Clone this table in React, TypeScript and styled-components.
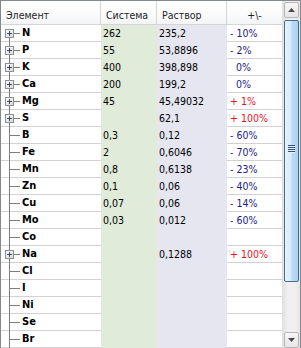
import React from "react";
import styled, { createGlobalStyle } from "styled-components";

interface RowType {
  name: string;
  expandable?: boolean;
  system: string;
  solution: string;
  diff: string;
  up?: boolean;
}

const rows: RowType[] = [
  { name: "N", expandable: true, system: "262", solution: "235,2", diff: "- 10%" },
  { name: "P", expandable: true, system: "55", solution: "53,8896", diff: "- 2%" },
  { name: "K", expandable: true, system: "400", solution: "398,898", diff: "  0%" },
  { name: "Ca", expandable: true, system: "200", solution: "199,2", diff: "  0%" },
  { name: "Mg", expandable: true, system: "45", solution: "45,49032", diff: "+ 1%", up: true },
  { name: "S", expandable: true, system: "", solution: "62,1", diff: "+ 100%", up: true },
  { name: "B", system: "0,3", solution: "0,12", diff: "- 60%" },
  { name: "Fe", system: "2", solution: "0,6046", diff: "- 70%" },
  { name: "Mn", system: "0,8", solution: "0,6138", diff: "- 23%" },
  { name: "Zn", system: "0,1", solution: "0,06", diff: "- 40%" },
  { name: "Cu", system: "0,07", solution: "0,06", diff: "- 14%" },
  { name: "Mo", system: "0,03", solution: "0,012", diff: "- 60%" },
  { name: "Co", system: "", solution: "", diff: "" },
  { name: "Na", expandable: true, system: "", solution: "0,1288", diff: "+ 100%", up: true },
  { name: "Cl", system: "", solution: "", diff: "" },
  { name: "I", system: "", solution: "", diff: "" },
  { name: "Ni", system: "", solution: "", diff: "" },
  { name: "Se", system: "", solution: "", diff: "" },
  { name: "Br", system: "", solution: "", diff: "" },
];

const TreeMark: React.FC<{ expandable?: boolean; first?: boolean }> = ({ expandable, first }) => (
  <TreeSvg width="21" height="17" viewBox="0 0 21 17">
    <line x1="8.5" y1={first ? 8 : 0} x2="8.5" y2="17" stroke="#7d7d7d" />
    <line x1={expandable ? 13 : 9} y1="8.5" x2="19" y2="8.5" stroke="#7d7d7d" />
    {expandable && (
      <>
        <defs>
          <linearGradient id="bx" x1="0" y1="0" x2="1" y2="1">
            <stop offset="0" stopColor="#ffffff" />
            <stop offset="1" stopColor="#d6d6d6" />
          </linearGradient>
        </defs>
        <rect x="4.5" y="4.5" width="8" height="8" fill="url(#bx)" stroke="#8e8f8f" />
        <line x1="6" y1="8.5" x2="11" y2="8.5" stroke="#3d4560" />
        <line x1="8.5" y1="6" x2="8.5" y2="11" stroke="#3d4560" />
      </>
    )}
  </TreeSvg>
);

const Arrow: React.FC<{ down?: boolean }> = ({ down }) => (
  <svg width="7" height="4" viewBox="0 0 7 4">
    <polygon points={down ? "0,0 7,0 3.5,4" : "0,4 7,4 3.5,0"} fill="#4a4a4a" />
  </svg>
);

const App: React.FC = () => {
  return (
    <>
      <GlobalStyle />
      <Frame>
        <TableArea>
          <HeaderRow>
            <HeaderCell>Элемент</HeaderCell>
            <HeaderCell>Система</HeaderCell>
            <HeaderCell>Раствор</HeaderCell>
            <HeaderCell $center>+\-</HeaderCell>
          </HeaderRow>
          {rows.map((row, i) => (
            <Row key={row.name}>
              <NameCell>
                <TreeMark expandable={row.expandable} first={i === 0} />
                <Name>{row.name}</Name>
              </NameCell>
              <ValueCell $bg="#e1ebd9">{row.system}</ValueCell>
              <ValueCell $bg="#e6e6f1">{row.solution}</ValueCell>
              <DiffCell $up={row.up}>{row.diff}</DiffCell>
            </Row>
          ))}
        </TableArea>
        <ScrollBar>
          <ScrollButton>
            <Arrow />
          </ScrollButton>
          <Thumb>
            <svg width="7" height="8" viewBox="0 0 7 8">
              <rect x="0" y="0" width="7" height="1" fill="#2e4f72" />
              <rect x="0" y="2" width="7" height="1" fill="#2e4f72" />
              <rect x="0" y="4" width="7" height="1" fill="#2e4f72" />
              <rect x="0" y="6" width="7" height="1" fill="#2e4f72" />
              <rect x="0" y="1" width="7" height="1" fill="#e6f2fc" />
              <rect x="0" y="3" width="7" height="1" fill="#e6f2fc" />
              <rect x="0" y="5" width="7" height="1" fill="#e6f2fc" />
              <rect x="0" y="7" width="7" height="1" fill="#e6f2fc" />
            </svg>
          </Thumb>
          <Spacer />
          <ScrollButton>
            <Arrow down />
          </ScrollButton>
        </ScrollBar>
      </Frame>
    </>
  );
};

export default App;

// Styled Components
const GlobalStyle = createGlobalStyle`
  html, body {
    margin: 0;
    padding: 0;
    background: #ffffff;
    overflow: hidden;
  }
  body {
    font-family: "DejaVu Sans Condensed", "DejaVu Sans", sans-serif;
  }
`;

const Frame = styled.div`
  width: 301px;
  height: 349px;
  box-sizing: border-box;
  border: 1px solid #828790;
  display: flex;
  overflow: hidden;
  background: #ffffff;
`;

const TableArea = styled.div`
  width: 281px;
  display: flex;
  flex-direction: column;
`;

const columns = "100px 56px 70px 55px";

const HeaderRow = styled.div`
  display: grid;
  grid-template-columns: ${columns};
  height: 24px;
  box-sizing: border-box;
  border-bottom: 1px solid #d5d5d5;
  background: linear-gradient(#ffffff, #fbfbfc 60%, #f3f4f6);
`;

const HeaderCell = styled.div<{ $center?: boolean }>`
  display: flex;
  align-items: center;
  justify-content: ${(p) => (p.$center ? "center" : "flex-start")};
  padding: 4px 0 0 ${(p) => (p.$center ? "0" : "5px")};
  border-right: 1px solid #d5d5d5;
  font-size: 10.5px;
  color: #1e1e1e;
  &:last-child {
    border-right: none;
  }
`;

const Row = styled.div`
  display: grid;
  grid-template-columns: ${columns};
  height: 17px;
  box-sizing: border-box;
  border-bottom: 1px solid #d2d2d2;
`;

const NameCell = styled.div`
  display: flex;
  align-items: flex-start;
`;

const TreeSvg = styled.svg`
  flex: none;
  display: block;
`;

const Name = styled.span`
  font-weight: bold;
  font-size: 11px;
  line-height: 16px;
  color: #000000;
`;

const ValueCell = styled.div<{ $bg: string }>`
  background: ${(p) => p.$bg};
  font-size: 10.5px;
  line-height: 16px;
  padding-left: 2px;
  color: #000000;
  margin-bottom: -1px;
`;

const DiffCell = styled.div<{ $up?: boolean }>`
  font-size: 10.5px;
  line-height: 16px;
  padding-left: 3px;
  white-space: pre;
  color: ${(p) => (p.$up ? "#e0141c" : "#1c1c84")};
`;

const ScrollBar = styled.div`
  width: 17px;
  display: flex;
  flex-direction: column;
  align-items: center;
  background: linear-gradient(to right, #e2e2e2, #f0f0f0 30%, #f0f0f0 70%, #e6e6e6);
  border-left: 1px solid #e0e0e0;
`;

const ScrollButton = styled.div`
  width: 15px;
  height: 16px;
  margin-top: 1px;
  box-sizing: border-box;
  border: 1px solid #b5b5b5;
  border-radius: 2px;
  background: linear-gradient(#f7f7f7, #e6e6e6);
  display: flex;
  align-items: center;
  justify-content: center;
`;

const Thumb = styled.div`
  width: 15px;
  height: 262px;
  margin-top: 2px;
  box-sizing: border-box;
  border: 1px solid #3c6f99;
  border-radius: 2px;
  background: linear-gradient(to right, #e8f3fc, #d6eafa 45%, #bcdcf5 55%, #a9d1f1);
  display: flex;
  align-items: center;
  justify-content: center;
  padding-bottom: 5px;
`;

const Spacer = styled.div`
  flex: 1;
`;
